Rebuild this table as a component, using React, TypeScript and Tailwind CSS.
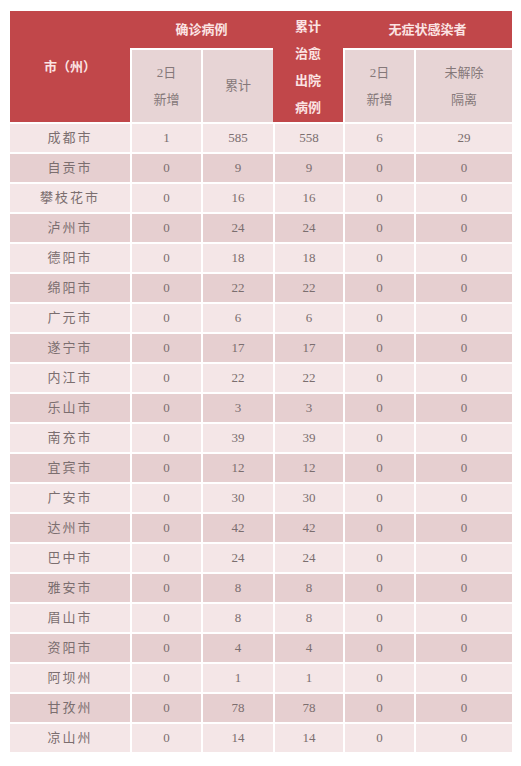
const rows: [string, number, number, number, number, number][] = [
  ["成都市", 1, 585, 558, 6, 29],
  ["自贡市", 0, 9, 9, 0, 0],
  ["攀枝花市", 0, 16, 16, 0, 0],
  ["泸州市", 0, 24, 24, 0, 0],
  ["德阳市", 0, 18, 18, 0, 0],
  ["绵阳市", 0, 22, 22, 0, 0],
  ["广元市", 0, 6, 6, 0, 0],
  ["遂宁市", 0, 17, 17, 0, 0],
  ["内江市", 0, 22, 22, 0, 0],
  ["乐山市", 0, 3, 3, 0, 0],
  ["南充市", 0, 39, 39, 0, 0],
  ["宜宾市", 0, 12, 12, 0, 0],
  ["广安市", 0, 30, 30, 0, 0],
  ["达州市", 0, 42, 42, 0, 0],
  ["巴中市", 0, 24, 24, 0, 0],
  ["雅安市", 0, 8, 8, 0, 0],
  ["眉山市", 0, 8, 8, 0, 0],
  ["资阳市", 0, 4, 4, 0, 0],
  ["阿坝州", 0, 1, 1, 0, 0],
  ["甘孜州", 0, 78, 78, 0, 0],
  ["凉山州", 0, 14, 14, 0, 0],
];

const cols = "grid grid-cols-[120px_71px_72px_70px_71px_98px]";

export default function App() {
  return (
    <div
      className="w-[521px] h-[766px] bg-white pt-[11px] pl-[10px]"
      style={{ fontFamily: '"Liberation Serif", "Noto Sans CJK SC", serif' }}
    >
      <div className="w-[502px]">
        {/* 表头 */}
        <div className={`${cols} grid-rows-[37px_74px] bg-[#c1474a] text-[13px] text-[#fbe3e3]`}>
          <div className="row-span-2 flex items-center justify-center font-bold">市（州）</div>
          <div className="col-span-2 flex items-center justify-center font-bold">确诊病例</div>
          <div className="row-span-2 flex flex-col items-center justify-center leading-[27px] font-bold">
            <span>累计</span>
            <span>治愈</span>
            <span>出院</span>
            <span>病例</span>
          </div>
          <div className="col-span-2 flex items-center justify-center font-bold">无症状感染者</div>
          <div className="col-start-2 row-start-2 border-t-2 border-l-2 border-white bg-[#e7d4d5] text-[#857879] flex flex-col items-center justify-center leading-[27px]">
            <span>2日</span>
            <span>新增</span>
          </div>
          <div className="col-start-3 row-start-2 border-t-2 border-l-2 border-white bg-[#e7d4d5] text-[#857879] flex items-center justify-center">
            累计
          </div>
          <div className="col-start-5 row-start-2 border-t-2 border-l-2 border-white bg-[#e7d4d5] text-[#857879] flex flex-col items-center justify-center leading-[27px]">
            <span>2日</span>
            <span>新增</span>
          </div>
          <div className="col-start-6 row-start-2 border-t-2 border-l-2 border-white bg-[#e7d4d5] text-[#857879] flex flex-col items-center justify-center leading-[27px]">
            <span>未解除</span>
            <span>隔离</span>
          </div>
        </div>

        {/* 数据行 */}
        {rows.map((r, i) => (
          <div
            key={r[0]}
            className={`${cols} h-[30px] border-t-2 border-white text-[13px] text-[#7b6e6f] ${
              i % 2 === 0 ? "bg-[#f4e6e7]" : "bg-[#e6cfd0]"
            }`}
          >
            <div className="flex items-center justify-center tracking-[2px]">{r[0]}</div>
            {r.slice(1).map((v, j) => (
              <div key={j} className="flex items-center justify-center border-l-2 border-white">
                {v}
              </div>
            ))}
          </div>
        ))}
      </div>
    </div>
  );
}
